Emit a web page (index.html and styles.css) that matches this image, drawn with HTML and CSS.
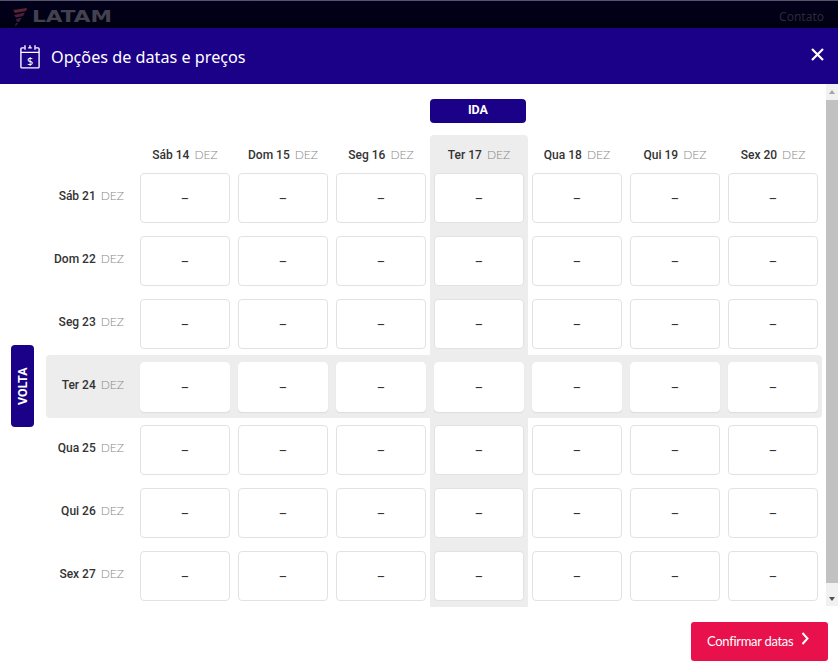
FILE: index.html
```html
<!DOCTYPE html>
<html lang="pt">
<head>
<meta charset="utf-8">
<title>Opções de datas e preços</title>
<link rel="stylesheet" href="styles.css">
</head>
<body>
<div class="topbar">
  <div class="brand">
    <svg class="brand-mark" width="16" height="20" viewBox="0 0 16 20"><path d="M1 3 L15 1 L14 4 L3 6Z" fill="#5c2430"/><path d="M2 8 L13 5.500 L11 9 L4 10.500Z" fill="#4a2038"/><path d="M4 12 L10 10.500 L7 15 L5 15Z" fill="#3a2038"/><path d="M4 16 L6 16 L4 19 L3 19Z" fill="#2c2044"/></svg>
    <span class="brand-name">LATAM</span>
  </div>
  <span class="contact">Contato</span>
</div>
<header class="modal-head">
  <svg class="head-icon" width="20" height="25" viewBox="0 0 22 27" fill="none" stroke="#fff" stroke-width="1.500">
    <path d="M5 4H2a1 1 0 0 0-1 1v20a1 1 0 0 0 1 1h18a1 1 0 0 0 1-1V5a1 1 0 0 0-1-1h-3"/>
    <path d="M9 4h4M5.500 1v5M16.500 1v5M11 1v3M1 9h20"/>
    <text x="11" y="22.500" text-anchor="middle" class="head-icon-text">$</text>
  </svg>
  <h1 class="modal-title">Opções de datas e preços</h1>
  <svg class="close" width="13" height="13" viewBox="0 0 13 13" stroke="#fff" stroke-width="2.200"><path d="M1 1l11 11M12 1L1 12"/></svg>
</header>
<div class="scroll-wrap">
  <main class="content">
    <div class="side"><span class="volta">VOLTA</span></div>
    <div class="table-wrap">
      <div class="ida-row"><span class="ida">IDA</span></div>
      <div class="grid" id="grid">
        <div class="corner"></div>
        <div class="day"><b>Sáb 14</b> <i>DEZ</i></div>
        <div class="day"><b>Dom 15</b> <i>DEZ</i></div>
        <div class="day"><b>Seg 16</b> <i>DEZ</i></div>
        <div class="day hl-head"><b>Ter 17</b> <i>DEZ</i></div>
        <div class="day"><b>Qua 18</b> <i>DEZ</i></div>
        <div class="day"><b>Qui 19</b> <i>DEZ</i></div>
        <div class="day"><b>Sex 20</b> <i>DEZ</i></div>

        <div class="label"><b>Sáb 21</b> <i>DEZ</i></div>
        <div class="cell"><div class="box">–</div></div><div class="cell"><div class="box">–</div></div><div class="cell"><div class="box">–</div></div><div class="cell hl"><div class="box">–</div></div><div class="cell"><div class="box">–</div></div><div class="cell"><div class="box">–</div></div><div class="cell"><div class="box">–</div></div>

        <div class="label"><b>Dom 22</b> <i>DEZ</i></div>
        <div class="cell"><div class="box">–</div></div><div class="cell"><div class="box">–</div></div><div class="cell"><div class="box">–</div></div><div class="cell hl"><div class="box">–</div></div><div class="cell"><div class="box">–</div></div><div class="cell"><div class="box">–</div></div><div class="cell"><div class="box">–</div></div>

        <div class="label"><b>Seg 23</b> <i>DEZ</i></div>
        <div class="cell"><div class="box">–</div></div><div class="cell"><div class="box">–</div></div><div class="cell"><div class="box">–</div></div><div class="cell hl"><div class="box">–</div></div><div class="cell"><div class="box">–</div></div><div class="cell"><div class="box">–</div></div><div class="cell"><div class="box">–</div></div>

        <div class="label hl hl-label"><b>Ter 24</b> <i>DEZ</i></div>
        <div class="cell hl"><div class="box flat">–</div></div><div class="cell hl"><div class="box flat">–</div></div><div class="cell hl"><div class="box flat">–</div></div><div class="cell hl"><div class="box flat">–</div></div><div class="cell hl"><div class="box flat">–</div></div><div class="cell hl"><div class="box flat">–</div></div><div class="cell hl hl-end"><div class="box flat">–</div></div>

        <div class="label"><b>Qua 25</b> <i>DEZ</i></div>
        <div class="cell"><div class="box">–</div></div><div class="cell"><div class="box">–</div></div><div class="cell"><div class="box">–</div></div><div class="cell hl"><div class="box">–</div></div><div class="cell"><div class="box">–</div></div><div class="cell"><div class="box">–</div></div><div class="cell"><div class="box">–</div></div>

        <div class="label"><b>Qui 26</b> <i>DEZ</i></div>
        <div class="cell"><div class="box">–</div></div><div class="cell"><div class="box">–</div></div><div class="cell"><div class="box">–</div></div><div class="cell hl"><div class="box">–</div></div><div class="cell"><div class="box">–</div></div><div class="cell"><div class="box">–</div></div><div class="cell"><div class="box">–</div></div>

        <div class="label"><b>Sex 27</b> <i>DEZ</i></div>
        <div class="cell"><div class="box">–</div></div><div class="cell"><div class="box">–</div></div><div class="cell"><div class="box">–</div></div><div class="cell hl"><div class="box">–</div></div><div class="cell"><div class="box">–</div></div><div class="cell"><div class="box">–</div></div><div class="cell"><div class="box">–</div></div>
      </div>
    </div>
  </main>
  <div class="scrollbar">
    <svg class="arrow" width="12" height="16" viewBox="0 0 12 16"><path d="M3 10l3-4 3 4z" fill="#a3a3a3"/></svg>
    <div class="thumb"></div>
    <svg class="arrow" width="12" height="16" viewBox="0 0 12 16"><path d="M3 7l3 4 3-4z" fill="#505050"/></svg>
  </div>
</div>
<footer class="foot">
  <button class="confirm"><span class="confirm-text">Confirmar datas</span>
    <svg class="confirm-icon" width="9" height="13" viewBox="0 0 9 13" fill="none" stroke="#fff" stroke-width="2"><path d="M1.500 1l5 5.500-5 5.500"/></svg>
  </button>
</footer>
</body>
</html>
```

FILE: styles.css
```css
* { box-sizing: border-box; }
html, body { margin: 0; padding: 0; }
body {
  width: 838px;
  height: 665px;
  overflow: hidden;
  background: #fff;
  font-family: "Lato", "Open Sans", sans-serif;
  display: flex;
  flex-direction: column;
}
.topbar {
  height: 28px;
  flex: none;
  border-top: 1px solid #55556a;
  background: linear-gradient(#03001c, #000012);
  display: flex;
  align-items: center;
  justify-content: space-between;
  padding: 3px 14px 0 12px;
}
.brand { display: flex; align-items: center; gap: 4px; margin-top: 2px; }
.brand-mark { display: block; }
.brand-name {
  font-family: "DejaVu Sans", sans-serif;
  font-weight: 700;
  font-size: 15px;
  color: #42424e;
  transform: scaleX(1.44);
  transform-origin: left center;
}
.contact {
  font-family: "Noto Sans", sans-serif;
  font-size: 12px;
  color: #2a2a38;
}
.modal-head {
  height: 56px;
  flex: none;
  background: #1b0088;
  display: flex;
  align-items: center;
  padding: 0 14px 0 20px;
  color: #fff;
}
.head-icon { flex: none; display: block; margin-right: 11px; }
.head-icon-text {
  font-family: "Noto Sans", sans-serif;
  font-size: 12px;
  fill: #fff;
  stroke: none;
}
.modal-title {
  margin: 0;
  padding-top: 1px;
  flex: 1;
  font-family: "Noto Sans", sans-serif;
  font-weight: 400;
  font-size: 16.200px;
  color: #fff;
}
.close { flex: none; display: block; margin-top: -3px; }
.scroll-wrap {
  height: 522px;
  flex: none;
  display: flex;
}
.content {
  flex: 1;
  display: flex;
  padding-left: 11px;
}
.side {
  width: 35px;
  flex: none;
  padding-top: 82px;
  display: flex;
  align-items: center;
}
.volta {
  width: 23px;
  height: 82px;
  border-radius: 4px;
  background: #1b0088;
  color: #fff;
  font-family: "Roboto", sans-serif;
  font-weight: 700;
  font-size: 12.500px;
  display: flex;
  align-items: center;
  justify-content: center;
  writing-mode: vertical-rl;
  transform: rotate(180deg);
}
.table-wrap { width: 776px; flex: none; padding-top: 15px; }
.ida-row { padding-left: 384px; margin-bottom: 12px; }
.ida {
  display: flex;
  width: 96px;
  height: 24px;
  padding-bottom: 4px;
  border-radius: 4px;
  background: #1b0088;
  color: #fff;
  font-family: "Roboto", sans-serif;
  font-weight: 700;
  font-size: 12.500px;
  align-items: center;
  justify-content: center;
}
.grid {
  display: grid;
  grid-template-columns: 90px repeat(7, 98px);
  grid-template-rows: 31px repeat(7, 63px);
}
.day {
  display: flex;
  align-items: center;
  justify-content: center;
  gap: 5px;
  padding-top: 8px;
  font-size: 12px;
}
b { font-family: "Roboto", sans-serif; font-weight: 500; color: #333; }
i { font-style: normal; font-weight: 300; color: #888; }
.hl-head { background: #ededed; border-radius: 4px 4px 0 0; }
.label {
  display: flex;
  align-items: center;
  justify-content: flex-end;
  gap: 5px;
  padding: 0 12px 4px 0;
  font-size: 12px;
}
.cell { padding: 7px 4px 6px; }
.hl { background: #ededed; }
.hl-label { border-radius: 4px 0 0 4px; }
.hl-end { border-radius: 0 4px 4px 0; }
.box {
  height: 50px;
  padding-bottom: 3px;
  background: #fff;
  border: 1px solid #e2e2e2;
  border-radius: 4px;
  display: flex;
  align-items: center;
  justify-content: center;
  font-size: 16px;
  font-weight: 400;
  color: #333;
}
.box.flat { border-color: #fff; box-shadow: 0 1px 1px #dcdcdc; }
.scrollbar {
  width: 12px;
  flex: none;
  background: #f1f1f1;
  display: flex;
  flex-direction: column;
}
.arrow { display: block; flex: none; }
.thumb { flex: 1; margin-bottom: 7px; background: #c1c1c1; }
.foot {
  flex: 1;
  display: flex;
  justify-content: flex-end;
  padding: 16px 10px 4px 0;
}
.confirm {
  width: 137px;
  height: 39px;
  border: 0;
  border-radius: 3px;
  background: #e8114b;
  color: #fff;
  font-family: "Lato", sans-serif;
  font-weight: 400;
  font-size: 13px;
  letter-spacing: -0.3px;
  display: flex;
  align-items: center;
  justify-content: flex-start;
  gap: 8px;
  padding: 0 0 2px 16px;
}
.confirm-icon { display: block; margin-top: -4px; }
```
